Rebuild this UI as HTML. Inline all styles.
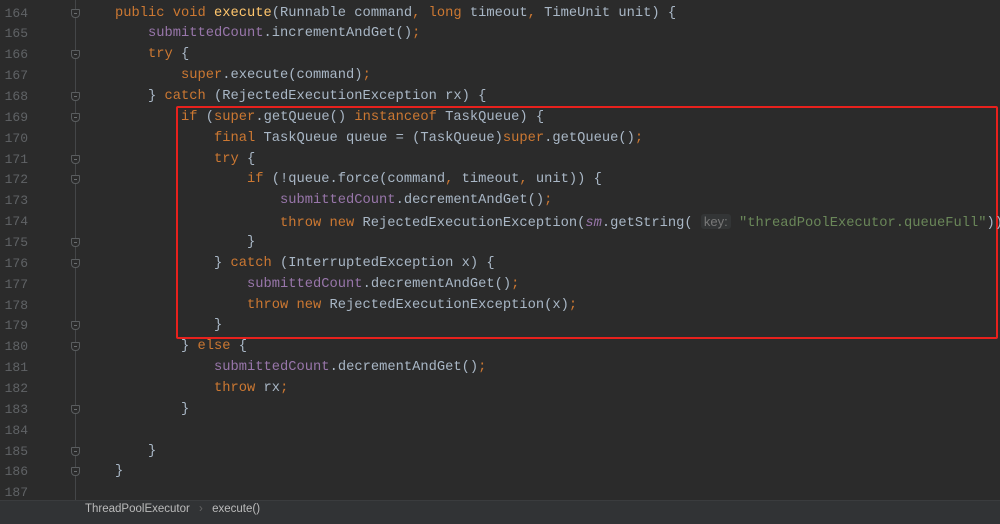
<!DOCTYPE html>
<html><head><meta charset="utf-8"><style>
body{margin:0;width:1000px;height:523px;background:#2b2b2b;overflow:hidden;position:relative;font-family:"Liberation Mono",monospace}
.ln{position:absolute;left:0;width:28px;text-align:right;color:#606366;font-size:13px;height:21px;line-height:21px}
.c{position:absolute;left:115px;white-space:pre;color:#a9b7c6;font-size:13.75px;height:21px;line-height:21px}
.k{color:#cc7832}.p{color:#9876aa}.s{color:#6a8759}.m{color:#ffc66d}.i{color:#9876aa;font-style:italic}
.h{color:#787878;background:#333536;font-family:"Liberation Sans",sans-serif;font-size:13px;padding:0 3px;border-radius:3px}
.f{position:absolute;left:71px;width:9px;height:9px;border:1px solid #5a5d5f;background:#2b2b2b;border-radius:1px 1px 4px 4px;box-sizing:border-box}
.f:after{content:"";position:absolute;left:2px;top:3px;width:3px;height:1px;background:#6b6e70}
</style></head><body>
<div style="position:absolute;left:75px;top:0;width:1px;height:500px;background:#444648"></div>
<div style="position:absolute;left:0;top:500px;width:1000px;height:23px;background:#313335;border-top:1px solid #3a3c3e"></div>
<div style="position:absolute;left:85px;top:503px;font-family:'Liberation Sans',sans-serif;font-size:11.5px;color:#bbbbbb">ThreadPoolExecutor <span style="color:#666;margin:0 6px">›</span> execute()</div>
<div style="position:absolute;left:176px;top:106px;width:818px;height:229px;border:2px solid #e8211d;border-radius:2px"></div>
<div id="L"></div>
<script>
var lines=[
'<span class="k">public void </span><span class="m">execute</span>(Runnable command<span class="k">, long </span>timeout<span class="k">, </span>TimeUnit unit) {',
'    <span class="p">submittedCount</span>.incrementAndGet()<span class="k">;</span>',
'    <span class="k">try </span>{',
'        <span class="k">super</span>.execute(command)<span class="k">;</span>',
'    } <span class="k">catch </span>(RejectedExecutionException rx) {',
'        <span class="k">if </span>(<span class="k">super</span>.getQueue() <span class="k">instanceof </span>TaskQueue) {',
'            <span class="k">final </span>TaskQueue queue = (TaskQueue)<span class="k">super</span>.getQueue()<span class="k">;</span>',
'            <span class="k">try </span>{',
'                <span class="k">if </span>(!queue.force(command<span class="k">, </span>timeout<span class="k">, </span>unit)) {',
'                    <span class="p">submittedCount</span>.decrementAndGet()<span class="k">;</span>',
'                    <span class="k">throw new </span>RejectedExecutionException(<span class="i">sm</span>.getString( <span class="h">key:</span> <span class="s">"threadPoolExecutor.queueFull"</span>))<span class="k">;</span>',
'                }',
'            } <span class="k">catch </span>(InterruptedException x) {',
'                <span class="p">submittedCount</span>.decrementAndGet()<span class="k">;</span>',
'                <span class="k">throw new </span>RejectedExecutionException(x)<span class="k">;</span>',
'            }',
'        } <span class="k">else </span>{',
'            <span class="p">submittedCount</span>.decrementAndGet()<span class="k">;</span>',
'            <span class="k">throw </span>rx<span class="k">;</span>',
'        }',
'',
'    }',
'}',
''];
var folds=[0,2,4,5,7,8,11,12,15,16,19,21,22];
var h='';
for(var i=0;i<24;i++){var t=2.5+i*20.86;
h+='<div class="ln" style="top:'+t+'px">'+(164+i)+'</div>';
h+='<div class="c" style="top:'+t+'px">'+lines[i]+'</div>';
if(folds.indexOf(i)>=0)h+='<div class="f" style="top:'+(t+6)+'px"></div>';}
document.getElementById('L').innerHTML=h;
</script>
</body></html>
